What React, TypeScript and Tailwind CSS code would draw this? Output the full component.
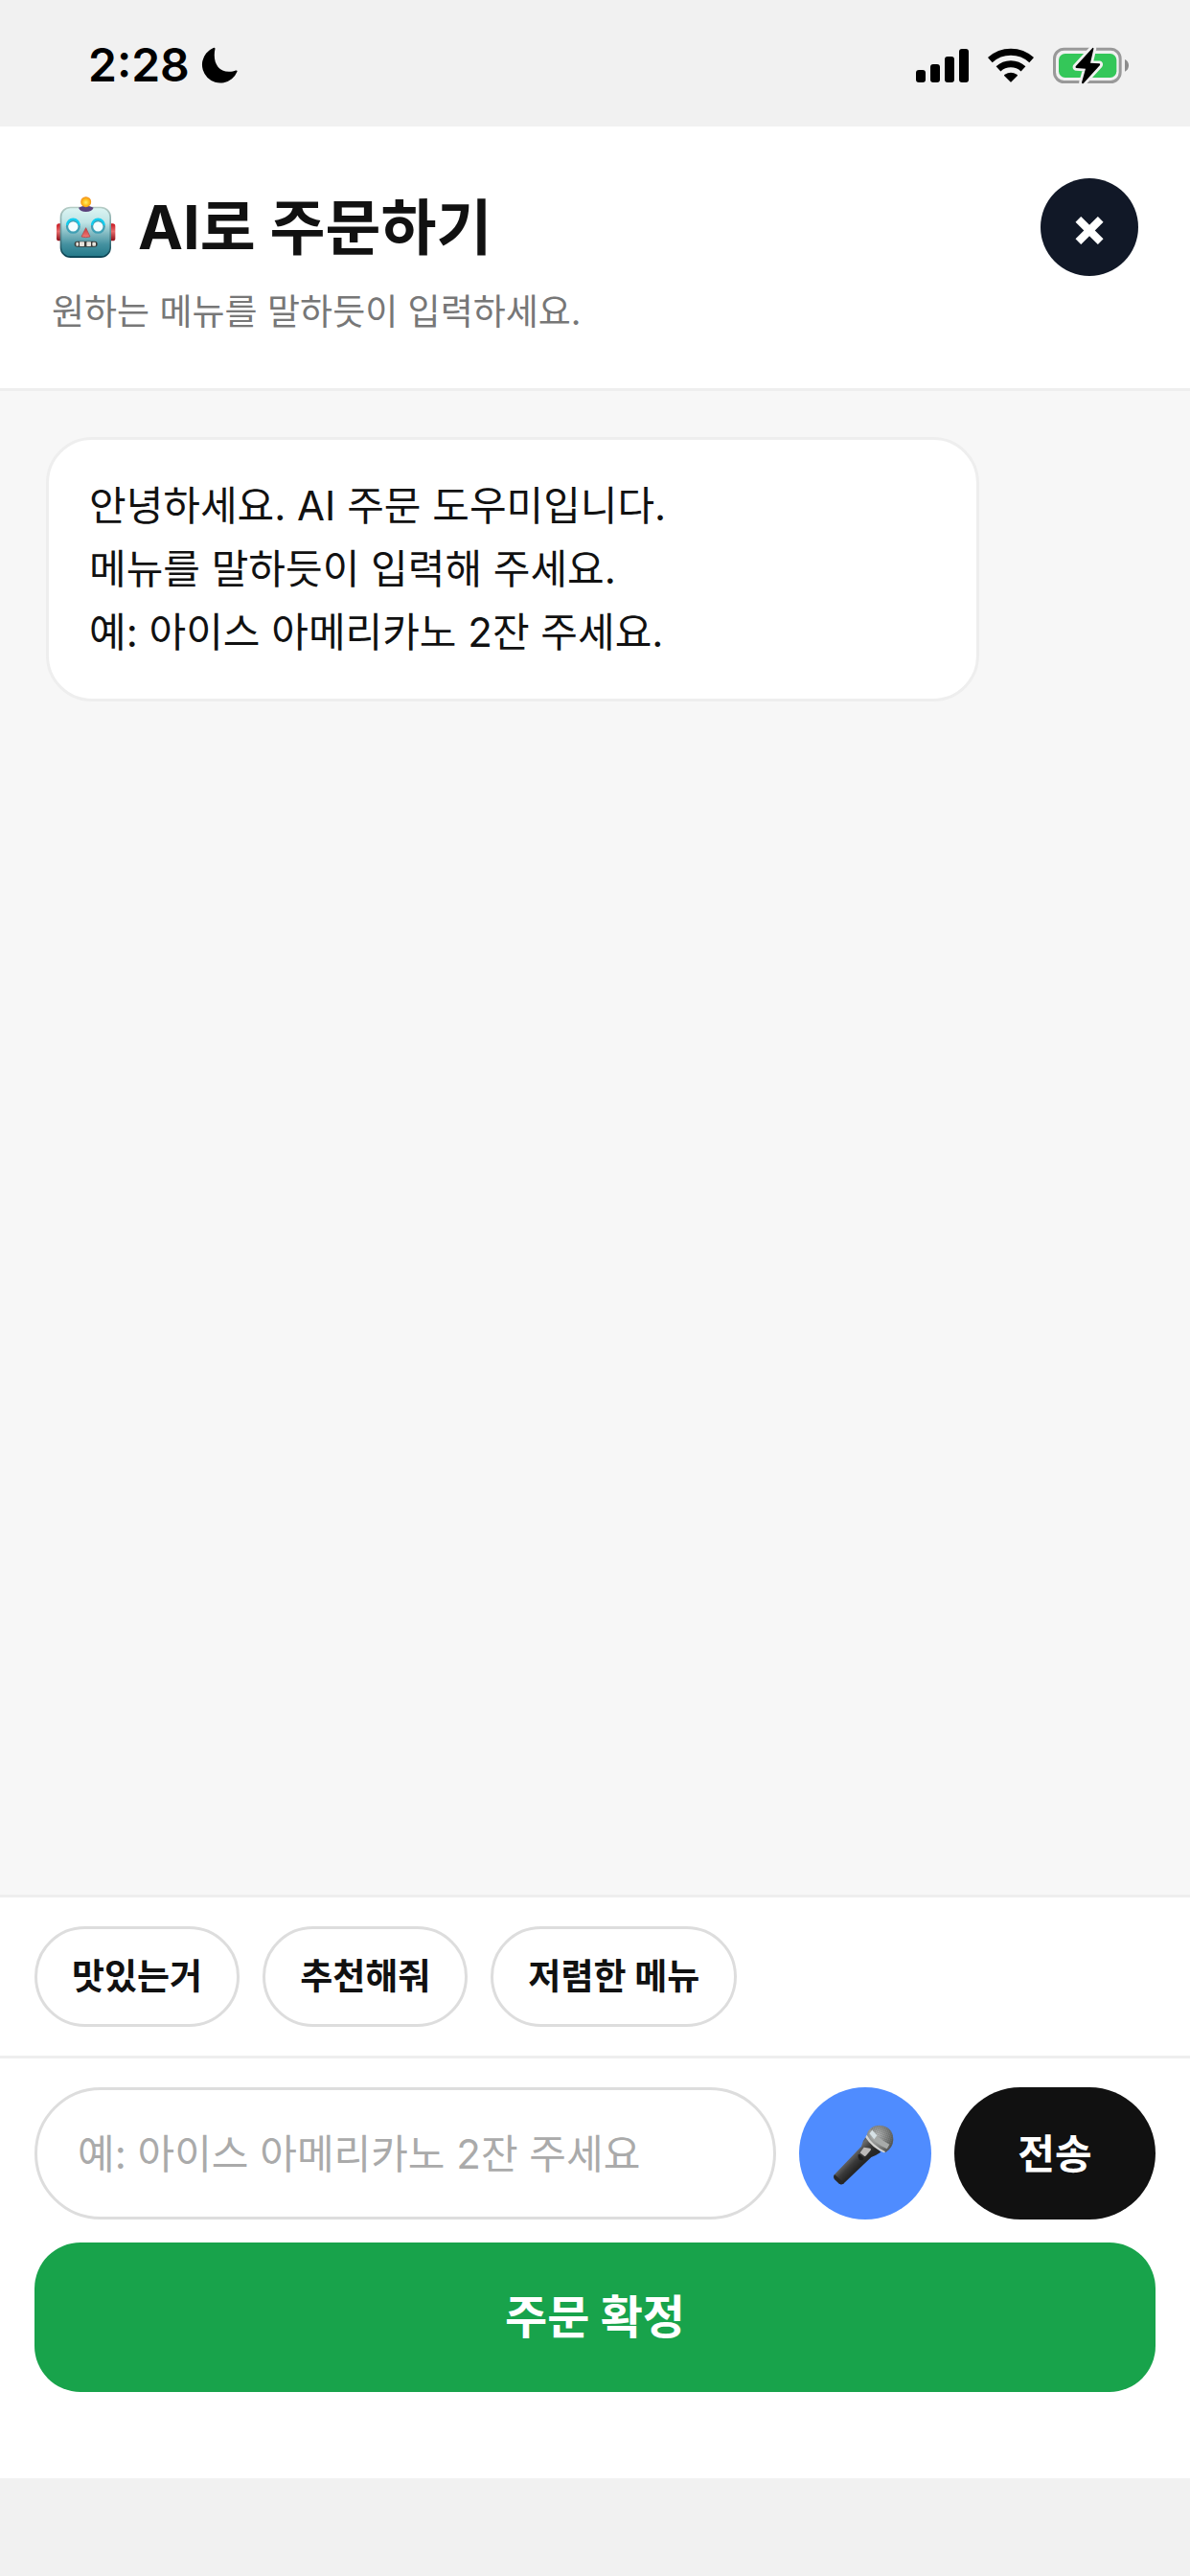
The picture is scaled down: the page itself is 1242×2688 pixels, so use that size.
import { useState } from "react";

const suggestions = ["맛있는거", "추천해줘", "저렴한 메뉴"];

const greeting = [
  "안녕하세요. AI 주문 도우미입니다.",
  "메뉴를 말하듯이 입력해 주세요.",
  "예: 아이스 아메리카노 2잔 주세요.",
];

function MoonIcon() {
  return (
    <svg viewBox="449 86 114 116" className="w-[38px] h-[39px]" aria-hidden="true">
      <path d="M487 88.500Q492 86 492.500 91C484 130 500 163 536 163C545 163 552 161 557 159Q563 158 561.500 163A57 57 0 1 1 487 88.500Z" />
    </svg>
  );
}

function SignalIcon() {
  return (
    <svg viewBox="81 90 165 105" className="w-[55px] h-[35px]" aria-hidden="true">
      <rect x="81" y="156" width="30" height="39" rx="9" />
      <rect x="126" y="138" width="30" height="57" rx="9" />
      <rect x="171" y="114" width="30" height="81" rx="9" />
      <rect x="216" y="90" width="30" height="105" rx="9" />
    </svg>
  );
}

function WifiIcon() {
  return (
    <svg viewBox="305 87 144 108" className="w-[48px] h-[36px]" aria-hidden="true">
      <g fill="none" stroke="#000" strokeWidth="21">
        <path d="M312 125A97 97 0 0 1 442 125" />
        <path d="M338 152.500A57 57 0 0 1 416 152.500" />
      </g>
      <path d="M357 175Q354 172 358 170Q377 158 396 170Q400 172 397 175L379 193Q377 195 375 193Z" />
    </svg>
  );
}

function BatteryIcon() {
  const bolt = "M631 87L578 145Q576 149 580 150L609 152L597 195Q598 201 603 197L654 141Q656 137 652 136L624 134L634 91Q635 85 631 87Z";
  return (
    <svg viewBox="507 84 237 117" className="w-[79px] h-[39px]" aria-hidden="true">
      <rect x="511.500" y="90.500" width="206" height="103" rx="30" fill="none" stroke="#999" strokeWidth="9" />
      <rect x="525" y="105" width="181" height="75" rx="20" fill="#34c759" />
      <path d="M732 123Q744 128 744 142Q744 156 732 161Z" fill="#8c8c8c" />
      <path d={bolt} fill="#f1f1f1" stroke="#f1f1f1" strokeWidth="17" strokeLinejoin="round" />
      <path d={bolt} />
    </svg>
  );
}

function RobotIcon() {
  return (
    <svg viewBox="12 34 210 198" className="w-[70px] h-[66px]" role="img" aria-label="로봇">
      <defs>
        <linearGradient id="face" x1="0" y1="0" x2="0" y2="1">
          <stop offset="0" stopColor="#dcf5f3" />
          <stop offset="0.300" stopColor="#c0e4e5" />
          <stop offset="0.750" stopColor="#43909f" />
          <stop offset="1" stopColor="#247989" />
        </linearGradient>
        <linearGradient id="edge" x1="0" y1="0" x2="0" y2="1">
          <stop offset="0" stopColor="#b4cbc4" />
          <stop offset="0.500" stopColor="#62949a" />
          <stop offset="1" stopColor="#063f4f" />
        </linearGradient>
        <linearGradient id="ear" x1="0" y1="0" x2="0" y2="1">
          <stop offset="0" stopColor="#c81720" />
          <stop offset="0.450" stopColor="#e76b6b" />
          <stop offset="1" stopColor="#8c0d17" />
        </linearGradient>
        <radialGradient id="bulb" cx="0.500" cy="0.550" r="0.550">
          <stop offset="0" stopColor="#fff06a" />
          <stop offset="0.500" stopColor="#ffc321" />
          <stop offset="1" stopColor="#f28a14" />
        </radialGradient>
        <linearGradient id="nose" x1="0" y1="0" x2="0" y2="1">
          <stop offset="0" stopColor="#c9393a" />
          <stop offset="1" stopColor="#f07a76" />
        </linearGradient>
      </defs>
      <rect x="27" y="122" width="24" height="54" rx="8" fill="url(#ear)" />
      <rect x="187" y="122" width="24" height="54" rx="8" fill="url(#ear)" />
      <rect x="40.500" y="71.500" width="155" height="155" rx="30" fill="url(#face)" stroke="url(#edge)" strokeWidth="5" />
      <path d="M96 72Q119 60 143 72Q137 85 119 85Q101 85 96 72Z" fill="#59417c" />
      <circle cx="119" cy="54" r="16.500" fill="url(#bulb)" />
      <circle cx="79" cy="131" r="19" fill="#f4fdff" stroke="#3f9fb4" strokeWidth="7" />
      <circle cx="157" cy="131" r="19" fill="#f4fdff" stroke="#3f9fb4" strokeWidth="7" />
      <path d="M60 127A19 19 0 0 1 98 127M138 127A19 19 0 0 1 176 127" fill="none" stroke="#12cdef" strokeWidth="7" />
      <path d="M119 135L132 163Q119 167 105 163Z" fill="url(#nose)" stroke="#b23a3c" strokeWidth="2" strokeLinejoin="round" />
      <rect x="83" y="177" width="72" height="18" rx="9" fill="#3a3a38" />
      <g fill="#e6e3dc">
        <rect x="88" y="180" width="8" height="12" rx="3" />
        <rect x="99" y="179" width="15" height="14" rx="2" />
        <rect x="121" y="179" width="14" height="14" rx="2" />
        <rect x="139" y="180" width="11" height="12" rx="3" />
      </g>
    </svg>
  );
}

function MicIcon() {
  return (
    <svg viewBox="30 42 198 198" className="w-[66px] h-[66px]" aria-hidden="true">
      <defs>
        <linearGradient id="handle" x1="70" y1="130" x2="115" y2="175" gradientUnits="userSpaceOnUse">
          <stop offset="0" stopColor="#2c2c2c" />
          <stop offset="0.350" stopColor="#6b6b6b" />
          <stop offset="0.700" stopColor="#3a3a3a" />
          <stop offset="1" stopColor="#262626" />
        </linearGradient>
        <radialGradient id="head" cx="0.400" cy="0.350" r="0.750">
          <stop offset="0" stopColor="#c6c8c8" />
          <stop offset="0.550" stopColor="#858786" />
          <stop offset="1" stopColor="#474846" />
        </radialGradient>
        <pattern id="mesh" width="6" height="6" patternUnits="userSpaceOnUse" patternTransform="rotate(20)">
          <path d="M0 0H6M0 0V6" stroke="#3d3f3e" strokeWidth="2" />
        </pattern>
      </defs>
      <path d="M131 90L178 137Q165 146 148 153L63 234Q57 241 48 236L33 222Q28 214 33 207L117 119Q120 102 131 90Z" fill="url(#handle)" />
      <path d="M33 207L63 234Q57 241 48 236L33 222Q28 214 33 207Z" fill="#272727" />
      <path d="M134 83Q141 54 173 53Q216 56 217 98Q216 123 193 138Q175 132 159 116Q140 99 134 83Z" fill="url(#head)" />
      <path d="M145 65Q155 52 175 53Q216 57 217 98Q215 114 207 122Q188 114 171 96Q154 82 145 65Z" fill="url(#mesh)" opacity="0.650" />
      <path d="M151 67Q166 93 205 113L197 127Q155 108 141 79Z" fill="#a7aaa9" />
      <path d="M151 68L166 85L157 97L143 79Z" fill="#d6e1e6" />
      <path d="M134 83Q150 114 193 136L187 139Q150 123 130 91Z" fill="#d4d4d2" />
      <path d="M107 145Q105 155 111 162L121 163L125 157L112 144Z" fill="#1d1d1d" />
      <path d="M125 122L145 125Q148 127 146 131L132 148Q129 151 126 149L113 139Z" fill="#bcbab9" />
    </svg>
  );
}

function StatusBar() {
  return (
    <div className="flex h-[132px] shrink-0 items-center justify-between pl-[92px] pr-16 pt-1">
      <div className="flex items-center gap-3">
        <span className="text-[48px] leading-none font-semibold text-black">2:28</span>
        <MoonIcon />
      </div>
      <div className="flex items-center gap-5">
        <SignalIcon />
        <WifiIcon />
        <BatteryIcon />
      </div>
    </div>
  );
}

function App() {
  const [message, setMessage] = useState("");

  return (
    <div className="flex min-h-screen flex-col bg-[#f1f1f1] pb-[102px] text-[#111] font-['Inter','Noto_Sans_CJK_KR',sans-serif]">
      <StatusBar />

      <header className="flex items-start justify-between border-b-3 border-[#eee] bg-white p-[54px]">
        <div>
          <h1 className="flex items-center gap-5 text-[63px] leading-[102px] font-bold">
            <RobotIcon />
            AI로 주문하기
          </h1>
          <p className="mt-3 text-[37px] leading-[51px] text-[#777]">원하는 메뉴를 말하듯이 입력하세요.</p>
        </div>
        <button
          aria-label="닫기"
          className="flex h-[102px] w-[102px] items-center justify-center rounded-full bg-[#111827] text-[54px] leading-none font-extrabold text-white"
        >
          ×
        </button>
      </header>

      <main className="flex-1 bg-[#f7f7f7] p-12">
        <div className="w-[85%] rounded-[48px] border-3 border-[#eee] bg-white px-[42px] py-9 text-[42px] leading-[66px]">
          {greeting.map((line) => (
            <p key={line}>{line}</p>
          ))}
        </div>
      </main>

      {/* quick suggestions */}
      <div className="flex gap-6 border-t-3 border-[#eee] bg-white px-9 py-[30px]">
        {suggestions.map((item) => (
          <button
            key={item}
            onClick={() => setMessage(item)}
            className="h-[105px] rounded-full border-3 border-[#ddd] bg-white px-9 text-[37px] leading-[51px] font-bold"
          >
            {item}
          </button>
        ))}
      </div>

      {/* message form */}
      <form
        onSubmit={(e) => e.preventDefault()}
        className="flex flex-col gap-6 border-t-3 border-[#eee] bg-white px-9 pt-[30px] pb-[90px]"
      >
        <div className="flex gap-6">
          <input
            type="text"
            aria-label="메뉴 입력"
            value={message}
            onChange={(e) => setMessage(e.target.value)}
            placeholder="예: 아이스 아메리카노 2잔 주세요"
            className="h-[138px] min-w-0 flex-1 rounded-full border-3 border-[#ddd] bg-white px-[42px] text-[42px] placeholder:text-[#aaa]"
          />
          <button
            type="button"
            aria-label="음성 입력"
            className="flex h-[138px] w-[138px] items-center justify-center rounded-full bg-[#4f8cff]"
          >
            <MicIcon />
          </button>
          <button type="submit" className="h-[138px] w-[210px] rounded-full bg-[#111] text-[42px] font-bold text-white">
            전송
          </button>
        </div>
        <button type="button" className="h-[156px] rounded-[48px] bg-[#18a34b] text-[48px] font-bold text-white">
          주문 확정
        </button>
      </form>
    </div>
  );
}

export default App;
